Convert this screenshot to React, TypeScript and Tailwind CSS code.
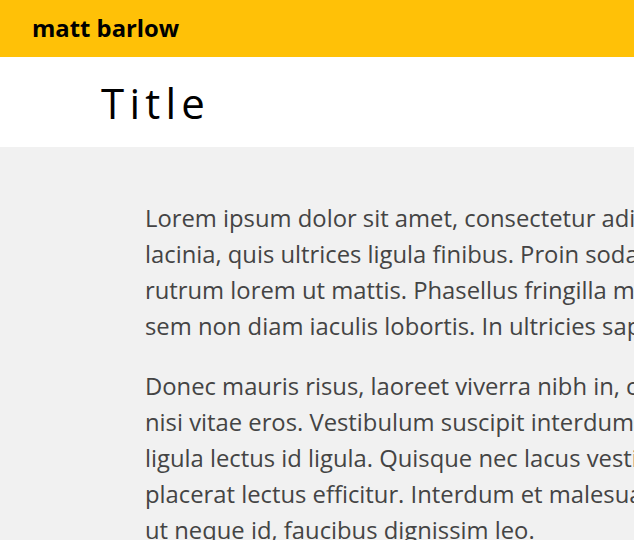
const paragraphs = [
  [
    "Lorem ipsum dolor sit amet, consectetur adipiscing elit. Nullam sed tortor",
    "lacinia, quis ultrices ligula finibus. Proin sodales enim nec velit",
    "rutrum lorem ut mattis. Phasellus fringilla mauris vel nibh dapibus",
    "sem non diam iaculis lobortis. In ultricies sapien eget ante.",
  ],
  [
    "Donec mauris risus, laoreet viverra nibh in, consequat tincidunt",
    "nisi vitae eros. Vestibulum suscipit interdum nulla, sit amet",
    "ligula lectus id ligula. Quisque nec lacus vestibulum, tincidunt",
    "placerat lectus efficitur. Interdum et malesuada fames ac ante ipsum",
    "ut neque id, faucibus dignissim leo.",
  ],
];

const App = () => {
  return (
    <div className="min-h-[540px] w-[634px] overflow-hidden bg-[#f1f1f1] font-['Open_Sans',sans-serif]">
      <header className="flex h-[57px] items-center bg-[#ffc107] pl-[32px]">
        <span className="text-[23.8px] font-bold text-black">matt barlow</span>
      </header>

      <div className="flex h-[90px] items-center bg-white pl-[101px]">
        <h1 className="text-[42px] font-normal tracking-[0.125em] text-black">
          Title
        </h1>
      </div>

      <main className="pl-[145px] pt-[53px]">
        {paragraphs.map((lines, i) => (
          <p
            key={i}
            className="mb-6 whitespace-nowrap text-[23.8px] leading-[36px] text-[#444]"
          >
            {lines.map((line, j) => (
              <span key={j} className="block">
                {line}
              </span>
            ))}
          </p>
        ))}
      </main>
    </div>
  );
};

export default App;
